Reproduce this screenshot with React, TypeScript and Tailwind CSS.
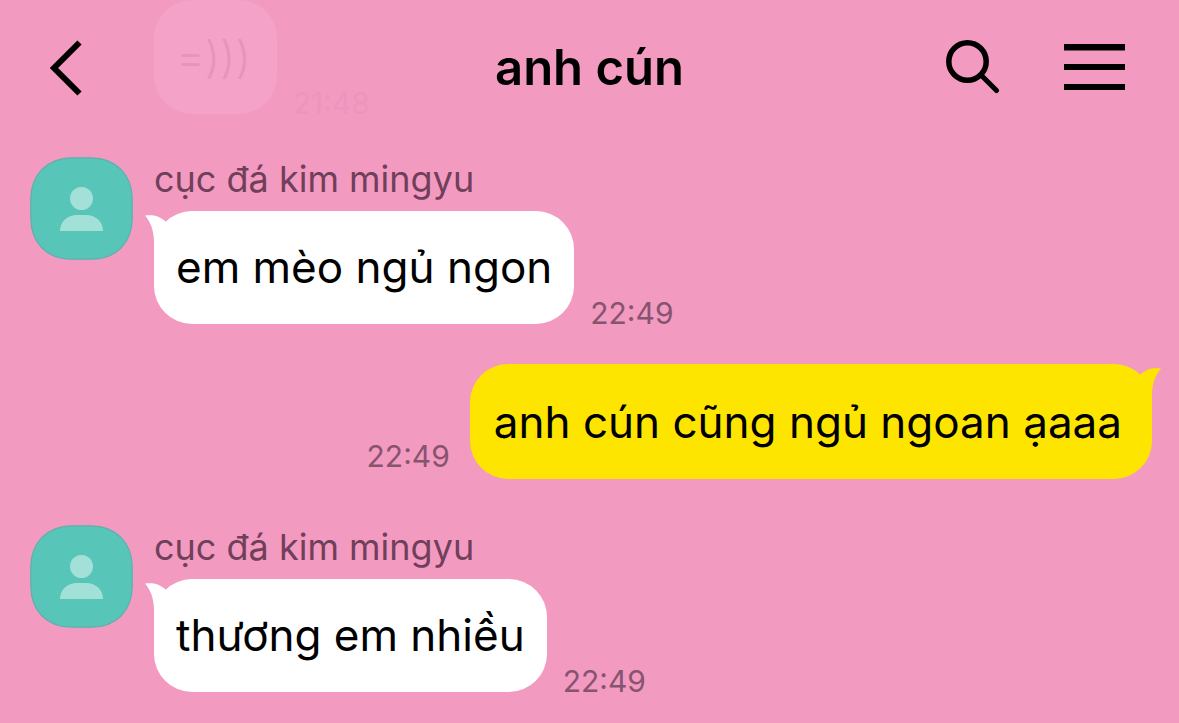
type Message = {
  id: number;
  mine: boolean;
  author?: string;
  text: string;
  time: string;
};

const messages: Message[] = [
  { id: 1, mine: false, author: 'cục đá kim mingyu', text: 'em mèo ngủ ngon', time: '22:49' },
  { id: 2, mine: true, text: 'anh cún cũng ngủ ngoan ạaaa', time: '22:49' },
  { id: 3, mine: false, author: 'cục đá kim mingyu', text: 'thương em nhiều', time: '22:49' },
];

const Avatar = () => (
  <svg className="h-[103px] w-[103px] shrink-0" viewBox="0 0 103 103" aria-hidden="true">
    <path
      d="M42 .8H61C86 .8 102.200 18 102.200 42V61C102.200 86 86 102.200 61 102.200H42C17 102.200 .8 86 .8 61V42C.8 18 17 .8 42 .8Z"
      fill="#57c5b7"
      stroke="#5fb0ab"
      strokeWidth="1.200"
    />
    <circle cx="51.500" cy="41.500" r="11.500" fill="#a3e0d8" />
    <path d="M30 74C30 64 38 58 47 58H56C65 58 73 64 73 74Z" fill="#a3e0d8" />
  </svg>
);

const Tail = ({ mine }: { mine: boolean }) => (
  <svg
    className={
      mine
        ? 'absolute top-1 -right-[9px] h-10 w-8 -scale-x-100 text-[#fee500]'
        : 'absolute top-1 -left-[9px] h-10 w-8 text-white'
    }
    viewBox="0 0 32 40"
    aria-hidden="true"
  >
    <path d="M0 .5C8 -.5 15 1 21 7L32 20V40H9V27C9 15 5 6 0 .5Z" fill="currentColor" />
  </svg>
);

const Bubble = ({ text, mine }: { text: string; mine: boolean }) => (
  <div
    className={
      mine
        ? 'relative rounded-[38px] bg-[#fee500] pb-[29px] pl-6 pr-[30px] pt-[30px]'
        : 'relative rounded-[38px] bg-white pb-[29px] pl-[22px] pr-[22px] pt-[28px]'
    }
  >
    <Tail mine={mine} />
    <p className="relative whitespace-nowrap text-[44px] leading-[56px] text-black">{text}</p>
  </div>
);

const Time = ({ children }: { children: string }) => (
  <time className="text-[30px] leading-[22px] text-[#875470]">{children}</time>
);

const Received = ({ message }: { message: Message }) => (
  <li className="flex gap-[21px]">
    <Avatar />
    <div>
      <div className="mb-[10px] text-[36px] leading-[44px] text-[#703f5a]">{message.author}</div>
      <div className="flex items-end gap-4">
        <Bubble text={message.text} mine={false} />
        <Time>{message.time}</Time>
      </div>
    </div>
  </li>
);

const Sent = ({ message }: { message: Message }) => (
  <li className="flex items-end justify-end gap-5 pb-[46px] pt-10">
    <div className="flex pb-3">
      <Time>{message.time}</Time>
    </div>
    <Bubble text={message.text} mine />
  </li>
);

const Header = () => (
  <header className="relative grid h-[136px] grid-cols-[1fr_auto_1fr] items-center px-[54px]">
    {/* older message faded out behind the bar */}
    <div className="absolute left-[154px] top-0 flex items-end gap-4">
      <div className="rounded-[38px] bg-[#f4a2c8] py-[29px] pl-[22px] pr-[26px] text-[44px] font-light leading-[56px] text-[#e794bb]">
        =)))
      </div>
      <div className="text-[30px] leading-[22px] text-[#ef95bd]">21:48</div>
    </div>

    <button type="button" aria-label="Back" className="relative -ml-1 justify-self-start">
      <svg className="h-14 w-8" viewBox="0 0 32 56" fill="none" stroke="#000" strokeWidth="6">
        <path d="M29.500 2.500L4 28L29.500 53.500" />
      </svg>
    </button>

    <h1 className="relative text-[49px] font-semibold leading-[60px] text-black">anh cún</h1>

    <div className="relative flex items-center gap-16 justify-self-end">
      <button type="button" aria-label="Search">
        <svg className="h-14 w-[54px]" viewBox="0 0 54 56" fill="none" stroke="#000" strokeWidth="5.500">
          <circle cx="21.500" cy="21.500" r="18.700" />
          <path d="M35 35L50.500 50.500" strokeWidth="5" strokeLinecap="round" />
        </svg>
      </button>
      <button type="button" aria-label="Menu">
        <svg className="h-[50px] w-[61px]" viewBox="0 0 61 50" fill="#000">
          <path d="M0 1H61V7.500H0ZM0 21H61V27H0ZM0 41H61V47H0Z" />
        </svg>
      </button>
    </div>
  </header>
);

const App = () => {
  return (
    <div className="min-h-screen overflow-hidden bg-[#f39ac1] font-['Inter','Noto_Sans',sans-serif]">
      <Header />
      <ul className="flex flex-col pb-8 pl-[30px] pr-[27px] pt-[21px]">
        {messages.map((message) =>
          message.mine ? (
            <Sent key={message.id} message={message} />
          ) : (
            <Received key={message.id} message={message} />
          ),
        )}
      </ul>
    </div>
  );
};

export default App;
